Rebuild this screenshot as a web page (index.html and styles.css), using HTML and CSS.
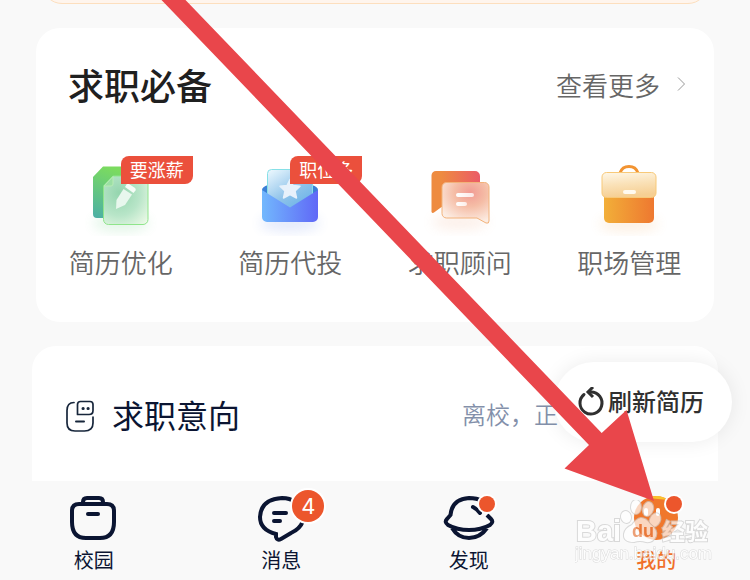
FILE: index.html
```html
<!DOCTYPE html>
<html lang="zh-CN">
<head>
<meta charset="utf-8">
<meta name="viewport" content="width=device-width, initial-scale=1">
<title>我的</title>
<link rel="stylesheet" href="styles.css">
</head>
<body>
<div class="app">
  <main class="page">
    <div class="banner"></div>

    <section class="card tools">
      <header class="tools-head">
        <h2 class="tools-title">求职必备</h2>
        <a class="more" href="#">查看更多
          <svg width="12" height="16" viewBox="0 0 12 16" fill="none" stroke="#999" stroke-width="1"><path d="M2 1.500 L8.500 8 L2 14.500"/></svg>
        </a>
      </header>
      <nav class="tool-grid">
        <a class="tool" href="#">
          <svg width="80" height="80" viewBox="0 0 80 80">
            <defs>
              <linearGradient id="g1" x1="0.300" y1="0" x2="0" y2="1"><stop offset="0" stop-color="#7bdb5f"/><stop offset="1" stop-color="#4bafa6"/></linearGradient>
              <radialGradient id="g2" cx="0.350" cy="0.350" r="0.850"><stop offset="0" stop-color="#94d5ae"/><stop offset="0.550" stop-color="#b8e5c8"/><stop offset="1" stop-color="#eaf9e6"/></radialGradient>
              <filter id="soft" x="-50%" y="-50%" width="200%" height="200%"><feGaussianBlur stdDeviation="6"/></filter>
            </defs>
            <ellipse cx="40" cy="67" rx="28" ry="9" fill="#58c874" opacity=".16" filter="url(#soft)"/>
            <path d="M22 10.500h30a5 5 0 0 1 5 5V57a5 5 0 0 1-5 5H16a4 4 0 0 1-4-4V21z" fill="url(#g1)"/>
            <path d="M32 20h30a5 5 0 0 1 5 5v38.500a5 5 0 0 1-5 5H27.500a5 5 0 0 1-5-5V30z" fill="url(#g2)" stroke="#8fe58b"/>
            <path d="M32 20.500V28a2 2 0 0 1-2 2h-7z" fill="#9bdfa4" stroke="#b8ecb5"/>
            <path d="M35 53l.5-9 7-11 8.500 5.500-7 10.500z" fill="#e8f7ed"/>
            <path d="M44 31l1.500-2.500a2 2 0 0 1 2.500-.5l6 4a2 2 0 0 1 .5 2.500L52.500 37z" fill="#f5fcf7"/>
          </svg>
          <span class="tag">要涨薪</span>
          <span class="tool-name">简历优化</span>
        </a>
        <a class="tool" href="#">
          <svg width="80" height="80" viewBox="0 0 80 80">
            <defs>
              <linearGradient id="b1"><stop offset="0" stop-color="#72b8fd"/><stop offset="1" stop-color="#6068f7"/></linearGradient>
              <linearGradient id="b2" x1="0" y1="0" x2="0.700" y2="1"><stop offset="0" stop-color="#effaff"/><stop offset="0.600" stop-color="#8fc3ea"/><stop offset="1" stop-color="#67b2e8"/></linearGradient>
            </defs>
            <ellipse cx="40" cy="67" rx="30" ry="9" fill="#6084e8" opacity=".16" filter="url(#soft)"/>
            <path d="M12 34q0-3 6-5h44q6 2 6 5v10H12z" fill="#3c7fd5"/>
            <rect x="17.500" y="13.500" width="45" height="43" rx="4" fill="url(#b2)" stroke="#86e0e7"/>
            <path d="M40 23.500l3 6 7 .8-5 4.700 1.500 7-6.500-3.500-6.500 3.500 1.500-7-5-4.700 7-.8z" fill="#e7f1fb" stroke="#e7f1fb" stroke-width="1.500" stroke-linejoin="round"/>
            <path d="M12 34l28 17.500L68 34v27a5 5 0 0 1-5 5H17a5 5 0 0 1-5-5z" fill="url(#b1)"/>
          </svg>
          <span class="tag">职位多</span>
          <span class="tool-name">简历代投</span>
        </a>
        <a class="tool" href="#">
          <svg width="80" height="80" viewBox="0 0 80 80">
            <defs>
              <linearGradient id="r1"><stop offset="0.200" stop-color="#ee8b40"/><stop offset="1" stop-color="#eb5b67"/></linearGradient>
              <radialGradient id="r2" cx="0.600" cy="0.250" r="0.750"><stop offset="0" stop-color="#f19b93"/><stop offset="0.450" stop-color="#f5bda6"/><stop offset="1" stop-color="#fcece2"/></radialGradient>
              <linearGradient id="r3"><stop offset="0" stop-color="#fff"/><stop offset="1" stop-color="#fff" stop-opacity=".75"/></linearGradient>
            </defs>
            <ellipse cx="40" cy="66" rx="28" ry="8" fill="#eb9a70" opacity=".14" filter="url(#soft)"/>
            <path d="M16 15h39a5 5 0 0 1 5 5v31H21.500L14 56.500a1.500 1.500 0 0 1-2.500-1.500V19.500a4.500 4.500 0 0 1 4.500-4.500z" fill="url(#r1)"/>
            <path d="M26.500 26.500h38a4.500 4.500 0 0 1 4.500 4.500v34q0 3-3 2l-9-5H26.500a4.500 4.500 0 0 1-4.500-4.500V31a4.500 4.500 0 0 1 4.500-4.500z" fill="url(#r2)" stroke="#f2b27a"/>
            <rect x="36" y="37" width="18" height="4" rx="2" fill="url(#r3)"/><rect x="36" y="46" width="11" height="4" rx="2" fill="url(#r3)"/>
          </svg>
          <span class="tool-name">求职顾问</span>
        </a>
        <a class="tool" href="#">
          <svg width="80" height="80" viewBox="0 0 80 80">
            <defs>
              <linearGradient id="o1"><stop offset="0" stop-color="#f2af39"/><stop offset="1" stop-color="#ee7830"/></linearGradient>
              <linearGradient id="o2" x1="0" y1="0" x2="0.200" y2="1"><stop offset="0" stop-color="#fef7e8"/><stop offset="0.500" stop-color="#fae2b9"/><stop offset="1" stop-color="#f6cf93"/></linearGradient>
            </defs>
            <ellipse cx="40" cy="68" rx="30" ry="8" fill="#efa350" opacity=".15" filter="url(#soft)"/>
            <path d="M31 17a9.500 9.500 0 0 1 18 0" fill="none" stroke="#f29432" stroke-width="3"/>
            <path d="M15 35h50v27a5 5 0 0 1-5 5H20a5 5 0 0 1-5-5z" fill="url(#o1)"/>
            <rect x="13" y="16.500" width="54" height="25" rx="4.500" fill="url(#o2)" stroke="#f8c978"/>
            <rect x="34" y="34" width="13" height="4" rx="2" fill="#fffaf0"/>
          </svg>
          <span class="tool-name">职场管理</span>
        </a>
      </nav>
    </section>

    <section class="card intent">
      <svg width="32" height="32" viewBox="0 0 32 32" fill="none" stroke="#17263b" stroke-width="1.700" stroke-linecap="round">
        <path d="M10 2.500q-7 0-7 8V23q0 8 8 8h9.500q8.500 0 8.500-8v-6"/>
        <path d="M16.500 1.500H26q3 0 3 3v6q0 4-4 4H13.500v-10q0-3 3-3z" stroke-linejoin="round"/>
        <path d="M12 21.500h8" stroke-width="2"/><path d="M19 8.500h.2M24 8.500h.2" stroke-width="3"/>
      </svg>
      <h2 class="intent-title">求职意向</h2>
      <span class="intent-state">离校，正在找工作</span>
      <button class="refresh" type="button">
        <svg width="28" height="30" viewBox="0 0 28 30" fill="none" stroke="#303030" stroke-width="3">
          <path d="M6 7.500A11 11 0 1 0 13 5h-2" stroke-linecap="round"/><path d="M15 0l-5 5 5 5"/>
        </svg>
        <span class="refresh-text">刷新简历</span>
      </button>
    </section>
  </main>

  <nav class="tabs">
    <a class="tab" href="#">
      <svg width="60" height="48" viewBox="0 0 60 48" fill="none" stroke="#0b1532" stroke-width="4">
        <path d="M19 9V7q0-4 4-4h12q4 0 4 4v2M15 9h28q7 0 7 7v11q0 16-14 16H22Q8 43 8 27V16q0-7 7-7z"/><path d="M24 19h10" stroke-linecap="round"/>
      </svg>
      <span>校园</span>
    </a>
    <a class="tab" href="#">
      <svg width="60" height="48" viewBox="0 0 60 48" fill="none" stroke="#0b1532" stroke-width="4">
        <path d="M44 7Q39 3 31 3 10 4 9 22q0 13 16 17v3q1 4 5 2l10-6q9-4 12-12"/>
        <path d="M23 18h12M23 26h6" stroke-linecap="round"/>
      </svg>
      <span class="count">4</span>
      <span>消息</span>
    </a>
    <a class="tab" href="#">
      <svg width="60" height="48" viewBox="0 0 60 48" fill="none" stroke="#0b1532" stroke-width="4">
        <path d="M43 6Q38 3 30 3 13 4 11.500 20L8 24q-3 3 1 6 9 5 21 5t21-5q4-3 1-6l-4-4M13 33q6 10 17 10t18-10"/><path d="M34 12q4 2 7 6" stroke-linecap="round"/>
      </svg>
      <i class="dot"></i>
      <span>发现</span>
    </a>
    <a class="tab current" href="#">
      <svg width="60" height="48" viewBox="0 0 60 48">
        <circle cx="30" cy="23" r="22" fill="#f0772c"/><path d="M22 3q11-5 20 2z" fill="#fac22e"/>
        <rect x="18" y="13" width="4" height="8" rx="2" fill="#fff"/><rect x="30" y="13" width="4" height="8" rx="2" fill="#fff"/>
      </svg>
      <i class="dot"></i>
      <span>我的</span>
    </a>
  </nav>

  <svg class="pointer" width="750" height="580" viewBox="0 0 750 580" aria-hidden="true">
    <path d="M161.500 0H185.500L601.700 433 626.500 410 654 501 564.500 468.500 589 445z" fill="#e9464b"/>
  </svg>
  <svg class="stamp" width="140" height="64" viewBox="0 0 140 64" aria-hidden="true">
    <g class="stamp-ink">
      <text class="stamp-name" x="1" y="41">Bai</text>
      <ellipse cx="61" cy="7" rx="5" ry="7"/><ellipse cx="73" cy="9" rx="5" ry="7" transform="rotate(15 73 9)"/><ellipse cx="51" cy="17" rx="5" ry="6" transform="rotate(-15 51 17)"/><ellipse cx="80" cy="20" rx="5" ry="7" transform="rotate(25 80 20)"/>
      <path d="M66 18q5 0 9 6 8 6 6 12-3 7-10 6-6-2-12 0-11 0-10-8 1-6 8-9 4-6 9-7z"/>
      <text class="stamp-du" x="57" y="37">du</text>
      <text class="stamp-cn" x="87" y="40">经验</text>
      <text class="stamp-url" x="0" y="59">jingyan.baidu.com</text>
    </g>
  </svg>
</div>
</body>
</html>
```
FILE: styles.css
```css
* { box-sizing: border-box; }

body {
  margin: 0;
  background: #f9f9f9;
  font-family: "Noto Sans CJK SC", sans-serif;
  color: #0b1532;
}

a { color: inherit; text-decoration: none; }
h2 { margin: 0; }
svg { display: block; flex: none; }

.app { display: flow-root; position: relative; overflow: hidden; }
.page { padding: 0 32px; }

.banner {
  height: 48px;
  margin: -44px 10px 24px;
  background: #fff5ed;
  border: 1px solid #fddfbe;
  border-radius: 20px;
}

.card { background: #fff; border-radius: 24px; }

.tools { margin: 0 4px 24px; padding: 26px 0 42px; }
.tools-head {
  display: flex;
  align-items: center;
  justify-content: space-between;
  height: 60px;
  padding: 0 26px 0 32px;
}
.tools-title { font-size: 36px; font-weight: 500; color: #1f2020; }
.more {
  display: flex;
  align-items: center;
  gap: 16px;
  font-size: 26px;
  font-weight: 350;
  color: #666;
}

.tool-grid {
  display: grid;
  grid-template-columns: repeat(4, 1fr);
  margin-top: 42px;
}
.tool {
  position: relative;
  display: flex;
  flex-direction: column;
  align-items: center;
  gap: 8px;
}
.tool-name { font-size: 26px; font-weight: 350; line-height: 36px; color: #666; }
.tag {
  position: absolute;
  top: 0;
  left: 50%;
  width: 72px;
  height: 28px;
  border-radius: 8px 0;
  background: #eb503c;
  color: #fff;
  font-size: 18px;
  line-height: 26px;
  text-align: center;
}

.intent {
  position: relative;
  display: flex;
  align-items: center;
  height: 135px;
  padding: 4px 32px 0;
  border-radius: 24px 24px 0 0;
}
.intent-title { margin-left: 16px; padding-bottom: 4px; font-size: 32px; font-weight: 400; }
.intent-state {
  margin-left: auto;
  margin-right: 32px;
  padding-bottom: 4px;
  white-space: nowrap;
  font-size: 24px;
  font-weight: 350;
  color: #8390aa;
}

.refresh {
  position: absolute;
  top: 16px;
  right: -14px;
  display: flex;
  align-items: center;
  gap: 2px;
  height: 80px;
  padding: 0 28px 0 24px;
  border: 0;
  border-radius: 40px;
  background: #fff;
  box-shadow: 0 0 20px rgba(0, 0, 0, 0.08);
  color: #303030;
  font-family: inherit;
  font-size: 24px;
  font-weight: 500;
}
.refresh-text { padding-bottom: 4px; }

.tabs {
  display: grid;
  grid-template-columns: repeat(4, 1fr);
  position: relative;
  padding: 14px 0 6px;
  background: #f9f9f9;
}
.tab {
  position: relative;
  display: flex;
  flex-direction: column;
  align-items: center;
  gap: 3px;
  font-size: 20px;
  line-height: 28px;
}
.current { color: #f0702a; font-weight: 500; }
.count, .dot {
  position: absolute;
  left: 50%;
  border-radius: 50%;
  background: #ec562c;
  box-shadow: 0 0 0 2px #fff;
}
.count {
  top: -5px;
  width: 32px;
  margin-left: 11px;
  color: #fff;
  font-family: Inter, sans-serif;
  font-size: 22px;
  line-height: 32px;
  text-align: center;
}
.dot { top: 1px; width: 16px; height: 16px; margin-left: 10px; }

.pointer { position: absolute; top: 0; left: 0; pointer-events: none; }
.stamp { position: absolute; right: 35px; bottom: 16px; pointer-events: none; }
.stamp-ink { fill: #fff; stroke: #ccc; stroke-width: 2px; paint-order: stroke; opacity: 0.7; }
.stamp-name { font: 700 29px "Liberation Sans", sans-serif; }
.stamp-du { font: 700 18px "Liberation Sans", sans-serif; fill: #e7793f; stroke: none; }
.stamp-cn { font: 700 23px "Noto Sans CJK SC", sans-serif; }
.stamp-url { font: 400 17px "Liberation Sans", sans-serif; stroke-width: 1px; }
```
